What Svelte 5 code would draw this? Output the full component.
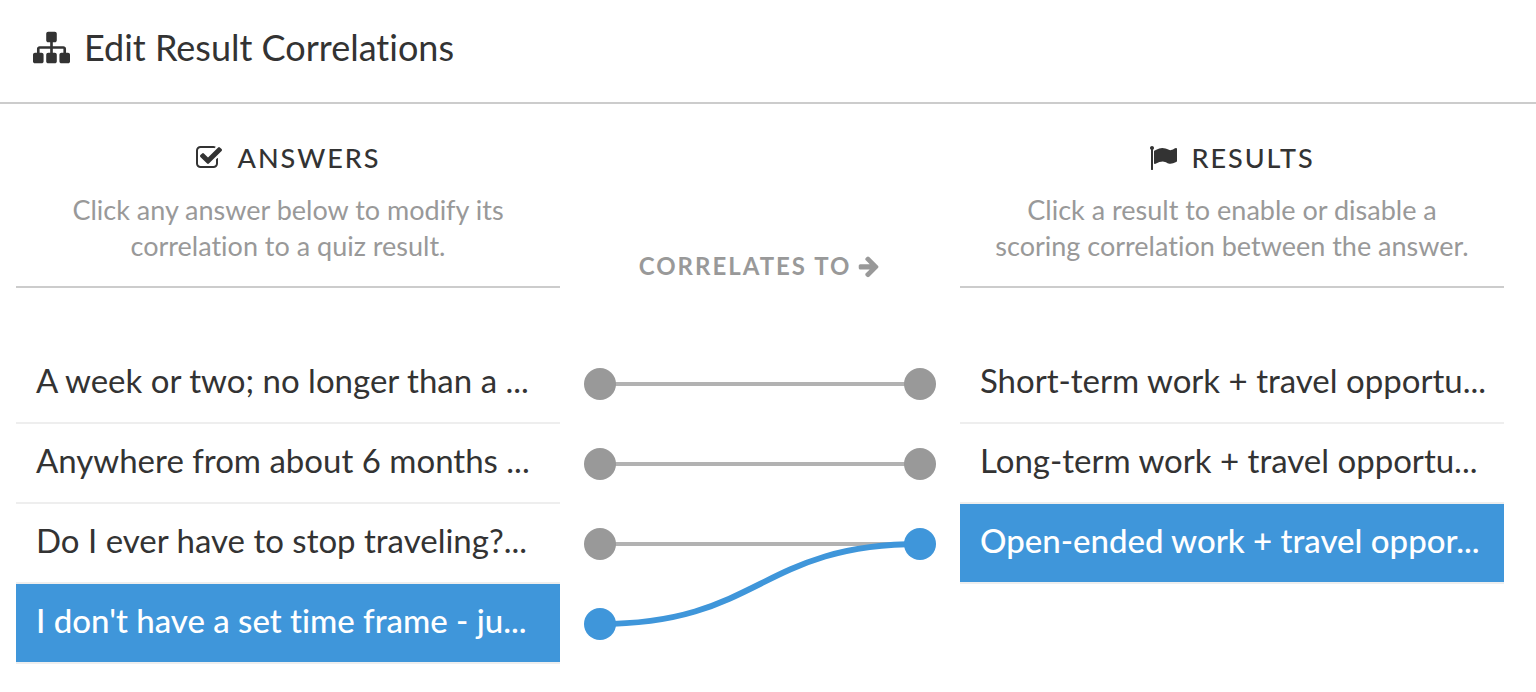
<script>
    let answers = [
        { text: 'A week or two; no longer than a ...', result: 0 },
        { text: 'Anywhere from about 6 months ...', result: 1 },
        { text: 'Do I ever have to stop traveling?...', result: 2 },
        { text: "I don't have a set time frame - ju...", result: 2 }
    ];
    let results = [
        'Short-term work + travel opportu...',
        'Long-term work + travel opportu...',
        'Open-ended work + travel oppor...'
    ];
    let selected = 3;

    // Must match the row height in the styles
    const rowHeight = 80;

    $: activeResult = answers[selected].result;

    function rowCenter(i) {
        return i * rowHeight + rowHeight / 2;
    }

    function linkPath(from, to) {
        const y1 = rowCenter(from);
        const y2 = rowCenter(to);
        return `M40 ${y1} C200 ${y1} 200 ${y2} 360 ${y2}`;
    }

    function correlate(i) {
        answers[selected].result = i;
    }
</script>

<header>
    <svg class="icon title-icon" viewBox="0 0 1792 1792" aria-hidden="true">
        <path d="M1792 1248v320q0 40-28 68t-68 28h-320q-40 0-68-28t-28-68v-320q0-40 28-68t68-28h96v-192h-512v192h96q40 0 68 28t28 68v320q0 40-28 68t-68 28h-320q-40 0-68-28t-28-68v-320q0-40 28-68t68-28h96v-192h-512v192h96q40 0 68 28t28 68v320q0 40-28 68t-68 28h-320q-40 0-68-28t-28-68v-320q0-40 28-68t68-28h96v-192q0-52 38-90t90-38h512v-192h-96q-40 0-68-28t-28-68v-320q0-40 28-68t68-28h320q40 0 68 28t28 68v320q0 40-28 68t-68 28h-96v192h512q52 0 90 38t38 90v192h96q40 0 68 28t28 68z" />
    </svg>
    <h1>Edit Result Correlations</h1>
</header>

<main>
    <section>
        <div class="intro">
            <h2>
                <svg class="icon" viewBox="0 0 1792 1792" aria-hidden="true">
                    <path d="M1472 930v318q0 119-84.5 203.5t-203.5 84.5h-832q-119 0-203.5-84.5t-84.5-203.5v-832q0-119 84.5-203.5t203.5-84.5h832q63 0 117 25 15 7 18 23 3 17-9 29l-49 49q-10 10-23 10-3 0-9-2-23-6-45-6h-832q-66 0-113 47t-47 113v832q0 66 47 113t113 47h832q66 0 113-47t47-113v-254q0-13 9-22l64-64q10-10 23-10 6 0 12 3 20 8 20 29zm231-489l-814 814q-24 24-57 24t-57-24l-430-430q-24-24-24-57t24-57l110-110q24-24 57-24t57 24l263 263 647-647q24-24 57-24t57 24l110 110q24 24 24 57t-24 57z" />
                </svg>
                ANSWERS
            </h2>
            <p>Click any answer below to modify its<br />correlation to a quiz result.</p>
        </div>
        <ul>
            {#each answers as answer, i}
                <li>
                    <button class:active={i === selected} on:click={() => (selected = i)}>{answer.text}</button>
                </li>
            {/each}
        </ul>
    </section>

    <div class="links">
        <div class="label">
            CORRELATES TO
            <svg class="icon arrow" viewBox="0 0 1792 1792" aria-hidden="true">
                <path d="M1600 960q0 54-37 91l-651 651q-39 37-91 37-51 0-90-37l-75-75q-38-38-38-91t38-91l293-293h-704q-52 0-84.5-37.5t-32.5-90.5v-128q0-53 32.5-90.5t84.5-37.5h704l-293-294q-38-36-38-90t38-90l75-75q38-38 90-38 53 0 91 38l651 651q37 35 37 90z" />
            </svg>
        </div>
        <svg class="lines" width="400" height={answers.length * rowHeight} aria-hidden="true">
            {#each answers as answer, i}
                <path class="line" d={linkPath(i, answer.result)} />
            {/each}
            <path class="line active" d={linkPath(selected, activeResult)} />
            {#each answers as answer, i}
                <circle class:active={i === selected} cx="40" cy={rowCenter(i)} r="16" />
            {/each}
            {#each results as result, i}
                <circle class:active={i === activeResult} cx="360" cy={rowCenter(i)} r="16" />
            {/each}
        </svg>
    </div>

    <section>
        <div class="intro">
            <h2>
                <svg class="icon" viewBox="0 0 1792 1792" aria-hidden="true">
                    <path d="M320 256q0 72-64 110v1266q0 13-9.5 22.5t-22.5 9.5h-64q-13 0-22.5-9.5t-9.5-22.5v-1266q-64-38-64-110 0-53 37.5-90.5t90.5-37.5 90.5 37.5 37.5 90.5zm1472 64v763q0 25-12.5 38.5t-39.5 27.5q-215 116-369 116-61 0-123.5-22t-108.5-48-115.5-48-142.5-22q-192 0-464 146-17 9-33 9-26 0-45-19t-19-45v-742q0-32 31-55 21-14 79-43 236-120 421-120 107 0 200 29t219 88q38 19 88 19 54 0 117.5-21t110-47 88-47 54.5-21q26 0 45 19t19 45z" />
                </svg>
                RESULTS
            </h2>
            <p>Click a result to enable or disable a<br />scoring correlation between the answer.</p>
        </div>
        <ul>
            {#each results as result, i}
                <li>
                    <button class:active={i === activeResult} on:click={() => correlate(i)}>{result}</button>
                </li>
            {/each}
        </ul>
    </section>
</main>

<style>
    :global(body) {
        margin: 0;
        background: #fff;
        color: #333;
        font-family: Lato, 'Open Sans', sans-serif;
        font-variant-ligatures: none;
    }

    header {
        display: flex;
        align-items: center;
        gap: 14px;
        padding: 23px 33px 31px;
        border-bottom: 2px solid #ccc;
    }

    h1 {
        margin: 0;
        font-size: 36px;
        font-weight: 400;
        line-height: 48px;
    }

    .icon {
        flex: none;
        width: 28px;
        height: 28px;
        fill: currentColor;
    }

    .title-icon {
        width: 37px;
        height: 37px;
    }

    main {
        display: grid;
        grid-template-columns: minmax(0, 1fr) 400px minmax(0, 1fr);
        padding: 0 32px 28px 16px;
    }

    .intro {
        box-sizing: border-box;
        height: 184px;
        padding-top: 32px;
        border-bottom: 2px solid #ccc;
        text-align: center;
    }

    h2 {
        display: flex;
        align-items: center;
        justify-content: center;
        gap: 14px;
        margin: 0 0 12px;
        font-family: 'Lato Medium', Lato, sans-serif;
        font-size: 27px;
        font-weight: 500;
        line-height: 44px;
        letter-spacing: 2px;
    }

    p {
        margin: 0;
        color: #999;
        font-size: 27px;
        line-height: 36px;
    }

    ul {
        margin: 56px 0 0;
        padding: 0;
        list-style: none;
    }

    li {
        border-bottom: 2px solid #eee;
    }

    button {
        display: block;
        width: 100%;
        height: 78px;
        padding: 0 20px 6px;
        border: 0;
        background: none;
        color: inherit;
        font: inherit;
        font-size: 33px;
        text-align: left;
        white-space: nowrap;
        overflow: hidden;
        cursor: pointer;
    }

    button.active {
        background: #3f96da;
        color: #fff;
        font-family: 'Lato Medium', Lato, sans-serif;
        font-weight: 500;
    }

    .label {
        display: flex;
        box-sizing: border-box;
        height: 184px;
        align-items: flex-end;
        justify-content: center;
        gap: 6px;
        padding-bottom: 4px;
        color: #999;
        font-size: 24px;
        font-weight: 700;
        line-height: 36px;
        letter-spacing: 2px;
    }

    .arrow {
        width: 24px;
        height: 36px;
    }

    .lines {
        display: block;
        margin-top: 56px;
    }

    .line {
        fill: none;
        stroke: #b2b2b2;
        stroke-width: 4;
    }

    .line.active {
        stroke: #3f96da;
        stroke-width: 6;
    }

    circle {
        fill: #999;
    }

    circle.active {
        fill: #3f96da;
    }
</style>
